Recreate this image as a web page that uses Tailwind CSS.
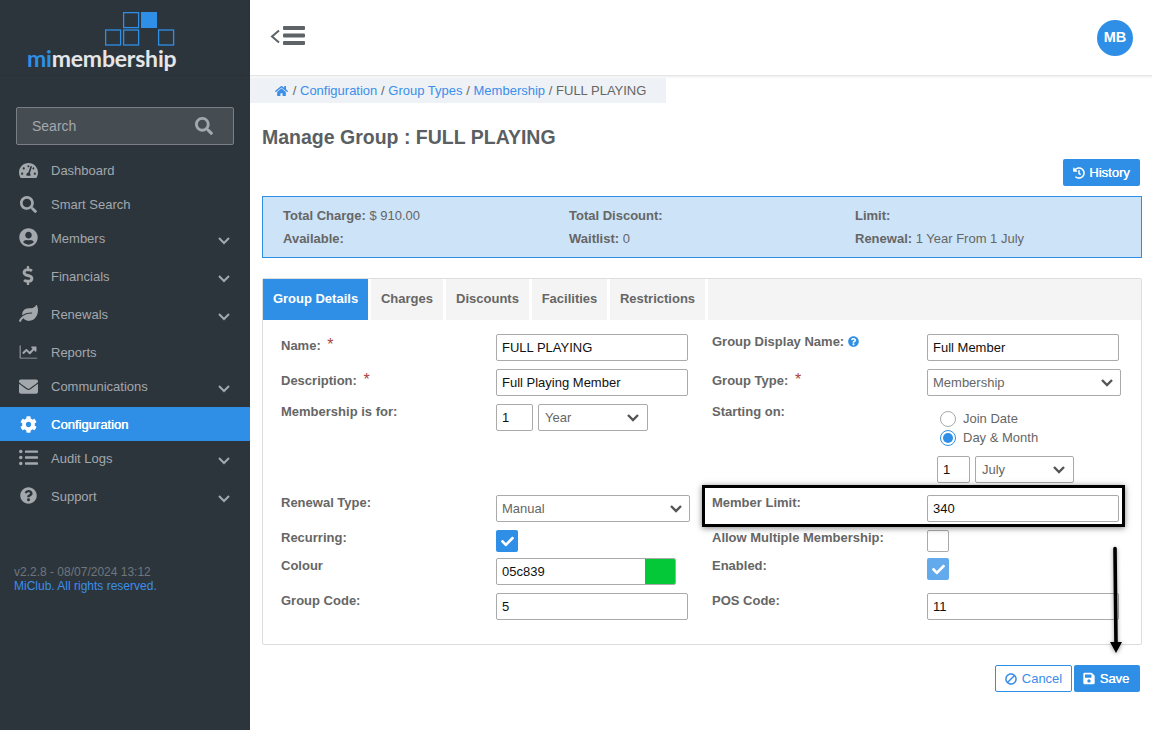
<!DOCTYPE html>
<html lang="en">
<head>
    <meta charset="UTF-8">
    <title>Manage Group</title>
    <script src="https://cdn.jsdelivr.net/npm/@tailwindcss/browser@4"></script>
</head>
<body class="font-['Liberation_Sans',Arial,sans-serif] text-[13px] text-[#666] bg-white">
<div class="relative flex w-[1152px] h-[730px] overflow-hidden">

    <!-- Sidebar -->
    <aside class="w-[250px] shrink-0 bg-[#2d353c] text-[#a3a8ad]">
        <div class="relative h-[76px] border-b border-[#2a3138]">
            <svg class="absolute left-[105px] top-[12px]" width="70" height="34" viewBox="0 0 70 34" fill="none" stroke="#2f8fe6" stroke-width="1.3">
                <rect x="18.6" y="0.6" width="15" height="15"/>
                <rect x="36" y="0" width="16" height="16" fill="#2f8fe6" stroke="none"/>
                <rect x="0.6" y="18" width="15" height="15"/>
                <rect x="18.6" y="18" width="15" height="15"/>
                <rect x="53.6" y="18" width="15" height="15"/>
            </svg>
            <div class="absolute left-[27px] top-[44px] font-['Lato',sans-serif] font-bold text-[23px] leading-[28px] tracking-[-0.2px] text-[#e4e6e8]"><span class="text-[#2f8fe6]">mi</span>membership</div>
        </div>

        <div class="mx-4 mt-[31px] h-[38px] flex items-center justify-between pl-[15px] pr-[20px] bg-[#454c52] border border-[#7b7f83] rounded-[2px] text-[14px] text-[#a3a8ad]">
            <span>Search</span>
            <svg class="w-[18px] h-[18px] fill-[#a3a8ad]" viewBox="0 0 512 512"><path d="M505 442.7L405.3 343c-4.5-4.5-10.6-7-17-7H372c27.6-35.3 44-79.7 44-128C416 93.1 322.9 0 208 0S0 93.1 0 208s93.1 208 208 208c48.3 0 92.7-16.4 128-44v16.3c0 6.4 2.5 12.5 7 17l99.7 99.7c9.4 9.4 24.6 9.4 33.9 0l28.3-28.3c9.4-9.4 9.4-24.6.1-34zM208 336c-70.7 0-128-57.2-128-128 0-70.7 57.2-128 128-128 70.7 0 128 57.2 128 128 0 70.7-57.2 128-128 128z"/></svg>
        </div>

        <nav class="mt-2">
            <a class="flex items-center h-[34px]">
                <span class="w-[51px] flex justify-center pl-[5px]"><svg class="w-[19px] h-[17px] fill-[#a3a8ad]" viewBox="0 0 576 512"><path d="M288 32C128.94 32 0 160.94 0 320c0 52.8 14.25 102.26 39.06 144.8 5.61 9.62 16.3 15.2 27.44 15.2h443c11.14 0 21.83-5.58 27.44-15.2C561.75 422.26 576 372.8 576 320c0-159.06-128.94-288-288-288zm0 64c14.71 0 26.58 10.13 30.32 23.65-1.11 2.26-2.64 4.23-3.45 6.67l-9.22 27.67c-5.13 3.49-10.97 6.01-17.64 6.01-17.67 0-32-14.33-32-32S270.33 96 288 96zM96 384c-17.67 0-32-14.33-32-32s14.33-32 32-32 32 14.33 32 32-14.33 32-32 32zm48-160c-17.67 0-32-14.33-32-32s14.33-32 32-32 32 14.33 32 32-14.33 32-32 32zm246.77-72.41l-61.33 184C343.13 347.33 352 364.54 352 384c0 11.72-3.38 22.55-8.88 32H232.88c-5.5-9.45-8.88-20.28-8.88-32 0-33.94 26.5-61.43 59.9-63.59l61.34-184.01c4.17-12.56 17.73-19.45 30.36-15.17 12.57 4.19 19.35 17.79 15.17 30.36zm14.66 57.2l15.52-46.55c3.47-1.29 7.13-2.23 11.05-2.23 17.67 0 32 14.33 32 32s-14.33 32-32 32c-11.38-.01-20.89-6.28-26.57-15.22zM480 384c-17.67 0-32-14.33-32-32s14.33-32 32-32 32 14.33 32 32-14.33 32-32 32z"/></svg></span>
                <span class="pt-[2px]">Dashboard</span>
            </a>
            <a class="flex items-center h-[34px]">
                <span class="w-[51px] flex justify-center pl-[5px]"><svg class="w-[17px] h-[17px] fill-[#a3a8ad]" viewBox="0 0 512 512"><path d="M505 442.7L405.3 343c-4.5-4.5-10.6-7-17-7H372c27.6-35.3 44-79.7 44-128C416 93.1 322.9 0 208 0S0 93.1 0 208s93.1 208 208 208c48.3 0 92.7-16.4 128-44v16.3c0 6.4 2.5 12.5 7 17l99.7 99.7c9.4 9.4 24.6 9.4 33.9 0l28.3-28.3c9.4-9.4 9.4-24.6.1-34zM208 336c-70.7 0-128-57.2-128-128 0-70.7 57.2-128 128-128 70.7 0 128 57.2 128 128 0 70.7-57.2 128-128 128z"/></svg></span>
                <span class="pt-[2px]">Smart Search</span>
            </a>
            <a class="flex items-start h-[38px] pt-[9px] leading-[16px]">
                <span class="w-[51px] flex justify-center pl-[5px] -mt-[2px]"><svg class="w-[19px] h-[19px] fill-[#a3a8ad]" viewBox="0 0 496 512"><path d="M248 8C111 8 0 119 0 256s111 248 248 248 248-111 248-248S385 8 248 8zm0 96c48.6 0 88 39.4 88 88s-39.4 88-88 88-88-39.4-88-88 39.4-88 88-88zm0 344c-58.7 0-111.3-26.6-146.5-68.2 18.8-35.4 55.6-59.8 98.5-59.8 2.4 0 4.8.4 7.1 1.1 13 4.2 26.6 6.9 40.9 6.9 14.3 0 28-2.7 40.9-6.9 2.3-.7 4.7-1.1 7.1-1.1 42.9 0 79.7 24.4 98.5 59.8C359.3 421.4 306.7 448 248 448z"/></svg></span>
                <span class="flex-1 mt-px">Members</span>
                <svg class="w-[12px] h-[8px] mr-[20px] mt-[7px] fill-none stroke-[#a3a8ad] stroke-2" viewBox="0 0 12 8"><path d="M1 1l5 5 5-5"/></svg>
            </a>
            <a class="flex items-start h-[38px] pt-[9px] leading-[16px]">
                <span class="w-[51px] flex justify-center pl-[5px] -mt-[2px]"><svg class="w-[12px] h-[19px] fill-[#a3a8ad]" viewBox="0 0 288 512"><path d="M209.2 233.4l-108-31.6C88.7 198.2 80 186.5 80 173.5c0-16.3 13.2-29.5 29.5-29.5h66.3c12.2 0 24.2 3.7 34.2 10.5 6.1 4.1 14.3 3.1 19.5-2l34.8-34c7.1-6.9 6.1-18.4-1.8-24.5C238 74.8 207.4 64.1 176 64V16c0-8.8-7.2-16-16-16h-32c-8.8 0-16 7.2-16 16v48h-2.5C45.8 64-5.4 118.7.5 183.6c4.2 46.1 39.4 83.6 83.8 96.6l102.5 30c12.5 3.7 21.2 15.3 21.2 28.3 0 16.3-13.2 29.5-29.5 29.5h-66.3C100 368 88 364.3 78 357.5c-6.1-4.1-14.3-3.1-19.5 2l-34.8 34c-7.1 6.9-6.1 18.4 1.8 24.5 24.5 19.2 55.1 29.9 86.5 30v48c0 8.8 7.2 16 16 16h32c8.8 0 16-7.2 16-16v-48.2c46.6-.9 90.3-28.6 105.7-72.7 21.5-61.6-14.6-124.8-72.5-141.7z"/></svg></span>
                <span class="flex-1 mt-px">Financials</span>
                <svg class="w-[12px] h-[8px] mr-[20px] mt-[7px] fill-none stroke-[#a3a8ad] stroke-2" viewBox="0 0 12 8"><path d="M1 1l5 5 5-5"/></svg>
            </a>
            <a class="flex items-start h-[38px] pt-[9px] leading-[16px]">
                <span class="w-[51px] flex justify-center pl-[5px] -mt-[1px]"><svg class="w-[19px] h-[17px] fill-[#a3a8ad]" viewBox="0 0 576 512"><path d="M546.2 9.7c-5.6-12.5-21.6-13-28.3-1.2C486.9 62.4 431.4 96 368 96h-80C182 96 96 182 96 288c0 7 .8 13.7 1.5 20.5C161.3 262.8 253.4 224 384 224c8.8 0 16 7.2 16 16s-7.2 16-16 16C132.6 256 26 410.1 2.4 468c-6.6 16.3 1.2 34.9 17.5 41.6 16.4 6.8 35-1.1 41.8-17.3 1.5-3.6 20.9-47.9 71.9-90.6 32.4 43.9 94 85.8 174.9 77.2C465.5 467.5 576 326.7 576 154.3c0-50.2-10.8-102.2-29.8-144.6z"/></svg></span>
                <span class="flex-1 mt-px">Renewals</span>
                <svg class="w-[12px] h-[8px] mr-[20px] mt-[7px] fill-none stroke-[#a3a8ad] stroke-2" viewBox="0 0 12 8"><path d="M1 1l5 5 5-5"/></svg>
            </a>
            <a class="flex items-center h-[34px]">
                <span class="w-[51px] flex justify-center pl-[5px]"><svg class="w-[21px] h-[18px] fill-[#a3a8ad]" viewBox="0 0 512 512"><path d="M496 416H32V80c0-8-6-14-14-14s-14 6-14 14v350c0 8 6 14 14 14h478c8 0 14-6 14-14s-6-14-14-14zM464 96H350c-18 0-27 22-14 35l35 35-83 83-74-74c-10-10-26-10-36 0l-90 90c-8 8-8 20 0 28l14 14c8 8 20 8 28 0l70-70 74 74c10 10 26 10 36 0l103-103 35 35c13 13 35 4 35-14V112c1-9-6-16-19-16z"/></svg></span>
                <span class="pt-[2px]">Reports</span>
            </a>
            <a class="flex items-start h-[38px] pt-[9px] leading-[16px]">
                <span class="w-[51px] flex justify-center pl-[5px] -mt-[1px]"><svg class="w-[19px] h-[19px] fill-[#a3a8ad]" viewBox="0 0 512 512"><path d="M502.3 190.8c3.9-3.1 9.7-.2 9.7 4.7V400c0 26.5-21.5 48-48 48H48c-26.5 0-48-21.5-48-48V195.6c0-5 5.7-7.8 9.7-4.7 22.4 17.4 52.1 39.5 154.1 113.6 21.1 15.4 56.7 47.8 92.2 47.6 35.7.3 72-32.8 92.3-47.6 102-74.1 131.6-96.3 154-113.7zM256 320c23.2.4 56.6-29.2 73.4-41.4 132.7-96.3 142.8-104.7 173.4-128.7 5.8-4.5 9.2-11.5 9.2-18.9v-19c0-26.5-21.5-48-48-48H48C21.5 64 0 85.5 0 112v19c0 7.4 3.4 14.3 9.2 18.9 30.6 23.9 40.7 32.4 173.4 128.7 16.8 12.2 50.2 41.8 73.4 41.4z"/></svg></span>
                <span class="flex-1 mt-px">Communications</span>
                <svg class="w-[12px] h-[8px] mr-[20px] mt-[7px] fill-none stroke-[#a3a8ad] stroke-2" viewBox="0 0 12 8"><path d="M1 1l5 5 5-5"/></svg>
            </a>
            <a class="flex items-center h-[34px] bg-[#2f8fe6] text-white">
                <span class="w-[51px] flex justify-center pl-[5px]"><svg class="w-[17px] h-[17px] fill-white" viewBox="0 0 512 512"><path d="M487.4 315.7l-42.6-24.6c4.3-23.2 4.3-47 0-70.2l42.6-24.6c4.9-2.8 7.1-8.6 5.5-14-11.1-35.6-30-67.8-54.7-94.6-3.8-4.1-10-5.1-14.8-2.3L380.8 110c-17.9-15.4-38.5-27.3-60.8-35.1V25.8c0-5.6-3.9-10.5-9.4-11.7-36.7-8.2-74.3-7.8-109.2 0-5.5 1.2-9.4 6.1-9.4 11.7V75c-22.2 7.9-42.8 19.8-60.8 35.1L88.7 85.5c-4.9-2.8-11-1.9-14.8 2.3-24.7 26.7-43.6 58.9-54.7 94.6-1.7 5.4.6 11.2 5.5 14L67.3 221c-4.3 23.2-4.3 47 0 70.2l-42.6 24.6c-4.9 2.8-7.1 8.6-5.5 14 11.1 35.6 30 67.8 54.7 94.6 3.8 4.1 10 5.1 14.8 2.3l42.6-24.6c17.9 15.4 38.5 27.3 60.8 35.1v49.2c0 5.6 3.9 10.5 9.4 11.7 36.7 8.2 74.3 7.8 109.2 0 5.5-1.2 9.4-6.1 9.4-11.7v-49.2c22.2-7.9 42.8-19.8 60.8-35.1l42.6 24.6c4.9 2.8 11 1.9 14.8-2.3 24.7-26.7 43.6-58.9 54.7-94.6 1.5-5.5-.7-11.3-5.6-14.1zM256 336c-44.1 0-80-35.9-80-80s35.9-80 80-80 80 35.9 80 80-35.9 80-80 80z"/></svg></span>
                <span class="pt-[2px] [text-shadow:0.3px_0_0_#fff]">Configuration</span>
            </a>
            <a class="flex items-start h-[38px] pt-[9px] leading-[16px]">
                <span class="w-[51px] flex justify-center pl-[5px] -mt-[2px]"><svg class="w-[19px] h-[19px] fill-[#a3a8ad]" viewBox="0 0 512 512"><path d="M48 48a48 48 0 1 0 48 48 48 48 0 0 0-48-48zm0 160a48 48 0 1 0 48 48 48 48 0 0 0-48-48zm0 160a48 48 0 1 0 48 48 48 48 0 0 0-48-48zm448 16H176a16 16 0 0 0-16 16v32a16 16 0 0 0 16 16h320a16 16 0 0 0 16-16v-32a16 16 0 0 0-16-16zm0-320H176a16 16 0 0 0-16 16v32a16 16 0 0 0 16 16h320a16 16 0 0 0 16-16V80a16 16 0 0 0-16-16zm0 160H176a16 16 0 0 0-16 16v32a16 16 0 0 0 16 16h320a16 16 0 0 0 16-16v-32a16 16 0 0 0-16-16z"/></svg></span>
                <span class="flex-1 mt-px">Audit Logs</span>
                <svg class="w-[12px] h-[8px] mr-[20px] mt-[7px] fill-none stroke-[#a3a8ad] stroke-2" viewBox="0 0 12 8"><path d="M1 1l5 5 5-5"/></svg>
            </a>
            <a class="flex items-start h-[38px] pt-[9px] leading-[16px]">
                <span class="w-[51px] flex justify-center pl-[5px] -mt-[1px]"><svg class="w-[17px] h-[17px] fill-[#a3a8ad]" viewBox="0 0 512 512"><path d="M504 256c0 136.997-111.043 248-248 248S8 392.997 8 256C8 119.083 119.043 8 256 8s248 111.083 248 248zM262.655 90c-54.497 0-89.255 22.957-116.549 63.758-3.536 5.286-2.353 12.415 2.715 16.258l34.699 26.31c5.205 3.947 12.621 3.008 16.665-2.122 17.864-22.658 30.113-35.797 57.303-35.797 20.429 0 45.698 13.148 45.698 32.958 0 14.976-12.363 22.667-32.534 33.976C247.128 238.528 216 254.941 216 296v4c0 6.627 5.373 12 12 12h56c6.627 0 12-5.373 12-12v-1.333c0-28.462 83.186-29.647 83.186-106.667 0-58.002-60.165-102-116.531-102zM256 338c-25.365 0-46 20.635-46 46 0 25.364 20.635 46 46 46s46-20.636 46-46c0-25.365-20.635-46-46-46z"/></svg></span>
                <span class="flex-1 mt-px">Support</span>
                <svg class="w-[12px] h-[8px] mr-[20px] mt-[7px] fill-none stroke-[#a3a8ad] stroke-2" viewBox="0 0 12 8"><path d="M1 1l5 5 5-5"/></svg>
            </a>
        </nav>

        <div class="mt-[48px] pl-[14px] text-[12px] leading-[14px] text-[#6f767c]">
            <div>v2.2.8 - 08/07/2024 13:12</div>
            <div class="text-[#3b8eea]">MiClub. All rights reserved.</div>
        </div>
    </aside>

    <!-- Main -->
    <main class="flex-1 min-w-0">
        <header class="h-[76px] flex items-center justify-between pl-[20px] pr-[19px] border-b border-[#e6e6e6] shadow-[0_1px_2px_rgba(0,0,0,0.08)]">
            <svg class="w-[36px] h-[20px] mb-[3px]" viewBox="0 0 36 20"><path d="M9 4.5L2 10.5l7 6" fill="none" stroke="#5e6367" stroke-width="2"/><rect x="13" y="0" width="22" height="4" rx="1" fill="#5e6367"/><rect x="13" y="7.5" width="22" height="4" rx="1" fill="#5e6367"/><rect x="13" y="15" width="22" height="4" rx="1" fill="#5e6367"/></svg>
            <div class="w-[36px] h-[36px] rounded-full bg-[#2f8fe6] text-white font-bold text-[14.5px] pt-px flex items-center justify-center">MB</div>
        </header>

        <div class="mt-[2px] w-[416px] h-[25px] bg-[#eef1f5] pl-[25px] flex items-center gap-[3.7px] text-[#3b8eea]">
            <svg class="w-[13px] h-[12px] fill-[#3b8eea]" viewBox="0 0 576 512"><path d="M280.37 148.26L96 300.11V464a16 16 0 0 0 16 16l112.06-.29a16 16 0 0 0 15.92-16V368a16 16 0 0 1 16-16h64a16 16 0 0 1 16 16v95.64a16 16 0 0 0 16 16.05L464 480a16 16 0 0 0 16-16V300L295.67 148.26a12.19 12.19 0 0 0-15.3 0zM571.6 251.47L488 182.56V44.05a12 12 0 0 0-12-12h-56a12 12 0 0 0-12 12v72.61L318.47 43a48 48 0 0 0-61 0L4.34 251.47a12 12 0 0 0-1.6 16.9l25.5 31A12 12 0 0 0 45.15 301l235.22-193.74a12.19 12.19 0 0 1 15.3 0L530.9 301a12 12 0 0 0 16.9-1.6l25.5-31a12 12 0 0 0-1.7-16.93z"/></svg>
            <span class="ml-px text-[#666]">/</span><a>Configuration</a>
            <span class="text-[#666]">/</span><a>Group Types</a>
            <span class="text-[#666]">/</span><a>Membership</a>
            <span class="text-[#666]">/</span><span class="text-[#666]">FULL PLAYING</span>
        </div>

        <div class="pl-[12px] pr-[10px]">
            <h1 class="mt-[22px] h-[24px] text-[19.5px] leading-[24px] font-bold text-[#5a5f63]">Manage Group : FULL PLAYING</h1>

            <div class="mt-[10px] flex justify-end pr-[2px]">
                <button class="h-[27px] w-[77px] bg-[#2f8fe6] text-white rounded-[2px] flex items-center justify-center gap-[4px] [text-shadow:0.3px_0_0_#fff]">
                    <svg class="w-[12px] h-[12px] fill-white" viewBox="0 0 512 512"><path d="M504 255.531c.253 136.64-111.18 248.372-247.82 248.468-59.015.042-113.223-20.53-155.822-54.911-11.077-8.94-11.905-25.541-1.839-35.607l11.267-11.267c8.609-8.609 22.353-9.551 31.891-1.984C173.062 425.135 212.781 440 256 440c101.705 0 184-82.311 184-184 0-101.705-82.311-184-184-184-48.814 0-93.149 18.969-126.068 49.932l50.754 50.754c10.08 10.08 2.941 27.314-11.313 27.314H24c-8.837 0-16-7.163-16-16V38.627c0-14.254 17.234-21.393 27.314-11.314l49.372 49.372C129.209 34.136 189.552 8 256 8c136.81 0 247.747 110.78 248 247.531zm-180.912 78.784l9.823-12.63c8.138-10.463 6.253-25.542-4.21-33.679L288 256.349V152c0-13.255-10.745-24-24-24h-16c-13.255 0-24 10.745-24 24v135.651l65.409 50.874c10.463 8.137 25.541 6.253 33.679-4.21z"/></svg>
                    History
                </button>
            </div>

            <!-- Summary -->
            <div class="mt-[10px] h-[62px] bg-[#cce3f8] border border-[#2f8fe6] pl-[20px] pt-[11px] grid grid-cols-[286px_286px_1fr] auto-rows-[23px] leading-[15px]">
                <div><b>Total Charge:</b> $ 910.00</div>
                <div><b>Total Discount:</b></div>
                <div><b>Limit:</b></div>
                <div><b>Available:</b></div>
                <div><b>Waitlist:</b> 0</div>
                <div><b>Renewal:</b> 1 Year From 1 July</div>
            </div>

            <!-- Tabs panel -->
            <div class="mt-[20px] h-[367px] border border-[#ddd] rounded-[2px]">
                <div class="h-[41px] flex bg-white gap-[3px] font-bold">
                    <div class="w-[105px] pb-[2px] bg-[#2f8fe6] text-white flex items-center justify-center">Group Details</div>
                    <div class="w-[72px] pb-[2px] bg-[#f4f4f4] flex items-center justify-center">Charges</div>
                    <div class="w-[83px] pb-[2px] bg-[#f4f4f4] flex items-center justify-center">Discounts</div>
                    <div class="w-[75px] pb-[2px] bg-[#f4f4f4] flex items-center justify-center">Facilities</div>
                    <div class="w-[95px] pb-[2px] bg-[#f4f4f4] flex items-center justify-center">Restrictions</div>
                    <div class="flex-1 bg-[#f4f4f4]"></div>
                </div>

                <div class="pl-[18px] pt-[14px] grid grid-cols-[215px_216px_215px_1fr] grid-rows-[35px_35px_91px_35px_28px_35px_35px] font-bold leading-[15px]">
                    <!-- Row 1 -->
                    <label class="pt-[3px]">Name: <span class="ml-[3px] text-[#a94442] text-[16px] font-normal">*</span></label>
                    <div><input class="w-[192px] h-[27px] border border-[#aaa] rounded-[2px] px-[5px] font-normal text-[#111]" value="FULL PLAYING"></div>
                    <label class="flex items-start gap-[4px]">Group Display Name:
                        <svg class="w-[11px] h-[11px] mt-[2px] fill-[#2f8fe6]" viewBox="0 0 512 512"><path d="M504 256c0 136.997-111.043 248-248 248S8 392.997 8 256C8 119.083 119.043 8 256 8s248 111.083 248 248zM262.655 90c-54.497 0-89.255 22.957-116.549 63.758-3.536 5.286-2.353 12.415 2.715 16.258l34.699 26.31c5.205 3.947 12.621 3.008 16.665-2.122 17.864-22.658 30.113-35.797 57.303-35.797 20.429 0 45.698 13.148 45.698 32.958 0 14.976-12.363 22.667-32.534 33.976C247.128 238.528 216 254.941 216 296v4c0 6.627 5.373 12 12 12h56c6.627 0 12-5.373 12-12v-1.333c0-28.462 83.186-29.647 83.186-106.667 0-58.002-60.165-102-116.531-102zM256 338c-25.365 0-46 20.635-46 46 0 25.364 20.635 46 46 46s46-20.636 46-46c0-25.365-20.635-46-46-46z"/></svg>
                    </label>
                    <div><input class="w-[192px] h-[27px] border border-[#aaa] rounded-[2px] px-[5px] font-normal text-[#111]" value="Full Member"></div>

                    <!-- Row 2 -->
                    <label class="pt-[3px]">Description: <span class="ml-[3px] text-[#a94442] text-[16px] font-normal">*</span></label>
                    <div><input class="w-[192px] h-[27px] border border-[#aaa] rounded-[2px] px-[5px] font-normal text-[#111]" value="Full Playing Member"></div>
                    <label class="pt-[3px]">Group Type: <span class="ml-[3px] text-[#a94442] text-[16px] font-normal">*</span></label>
                    <div class="w-[194px] h-[27px] border border-[#aaa] rounded-[2px] px-[5px] flex items-center justify-between font-normal">
                        <span>Membership</span>
                        <svg class="w-[12px] h-[8px] mr-[2px] fill-none stroke-[#555] stroke-[2.4]" viewBox="0 0 12 8"><path d="M1 1l5 5 5-5"/></svg>
                    </div>

                    <!-- Row 3 -->
                    <label>Membership is for:</label>
                    <div class="flex gap-[5px] items-start font-normal">
                        <input class="w-[37px] h-[27px] border border-[#aaa] rounded-[2px] px-[5px] text-[#111]" value="1">
                        <div class="w-[110px] h-[27px] border border-[#aaa] rounded-[2px] px-[6px] flex items-center justify-between">
                            <span>Year</span>
                            <svg class="w-[12px] h-[8px] mr-[2px] fill-none stroke-[#555] stroke-[2.4]" viewBox="0 0 12 8"><path d="M1 1l5 5 5-5"/></svg>
                        </div>
                    </div>
                    <label>Starting on:</label>
                    <div class="font-normal pl-[13px] pt-[5px]">
                        <div class="flex items-center h-[19px] gap-[7px]"><span class="w-[16px] h-[16px] rounded-full border border-[#aaa] bg-white"></span>Join Date</div>
                        <div class="flex items-center h-[19px] gap-[7px]"><span class="w-[16px] h-[16px] rounded-full border border-[#2f8fe6] bg-white flex items-center justify-center"><span class="w-[10px] h-[10px] rounded-full bg-[#2f8fe6]"></span></span>Day &amp; Month</div>
                        <div class="flex gap-[5px] mt-[9px] -ml-[3px]">
                            <input class="w-[33px] h-[27px] border border-[#aaa] rounded-[2px] px-[5px] text-[#111]" value="1">
                            <div class="w-[99px] h-[27px] border border-[#aaa] rounded-[2px] px-[6px] flex items-center justify-between">
                                <span>July</span>
                                <svg class="w-[12px] h-[8px] mr-[2px] fill-none stroke-[#555] stroke-[2.4]" viewBox="0 0 12 8"><path d="M1 1l5 5 5-5"/></svg>
                            </div>
                        </div>
                    </div>

                    <!-- Row 4 -->
                    <label>Renewal Type:</label>
                    <div class="w-[194px] h-[27px] border border-[#aaa] rounded-[2px] px-[5px] flex items-center justify-between font-normal">
                        <span>Manual</span>
                        <svg class="w-[12px] h-[8px] mr-[2px] fill-none stroke-[#555] stroke-[2.4]" viewBox="0 0 12 8"><path d="M1 1l5 5 5-5"/></svg>
                    </div>
                    <label>Member Limit:</label>
                    <div><input class="w-[192px] h-[27px] border border-[#aaa] rounded-[2px] px-[5px] font-normal text-[#111]" value="340"></div>

                    <!-- Row 5 -->
                    <label>Recurring:</label>
                    <div class="w-[22px] h-[22px] bg-[#2f8fe6] rounded-[2px] flex items-center justify-center">
                        <svg class="w-[13px] h-[13px] fill-white" viewBox="0 0 512 512"><path d="M173.898 439.404l-166.4-166.4c-9.997-9.997-9.997-26.206 0-36.204l36.203-36.204c9.997-9.998 26.207-9.998 36.204 0L192 312.69 432.095 72.596c9.997-9.997 26.207-9.997 36.204 0l36.203 36.204c9.997 9.997 9.997 26.206 0 36.204l-294.4 294.401c-9.998 9.997-26.207 9.997-36.204-.001z"/></svg>
                    </div>
                    <label>Allow Multiple Membership:</label>
                    <div class="w-[22px] h-[22px] border border-[#aaa] rounded-[2px] bg-white"></div>

                    <!-- Row 6 -->
                    <label>Colour</label>
                    <div class="w-[180px] h-[27px] border border-[#aaa] rounded-[2px] flex font-normal text-[#111] overflow-hidden">
                        <input class="w-[148px] px-[5px]" value="05c839">
                        <div class="flex-1 bg-[#05c839]"></div>
                    </div>
                    <label>Enabled:</label>
                    <div class="w-[22px] h-[22px] bg-[#63aaec] rounded-[2px] flex items-center justify-center">
                        <svg class="w-[13px] h-[13px] fill-white" viewBox="0 0 512 512"><path d="M173.898 439.404l-166.4-166.4c-9.997-9.997-9.997-26.206 0-36.204l36.203-36.204c9.997-9.998 26.207-9.998 36.204 0L192 312.69 432.095 72.596c9.997-9.997 26.207-9.997 36.204 0l36.203 36.204c9.997 9.997 9.997 26.206 0 36.204l-294.4 294.401c-9.998 9.997-26.207 9.997-36.204-.001z"/></svg>
                    </div>

                    <!-- Row 7 -->
                    <label>Group Code:</label>
                    <div><input class="w-[192px] h-[27px] border border-[#aaa] rounded-[2px] px-[5px] font-normal text-[#111]" value="5"></div>
                    <label>POS Code:</label>
                    <div><input class="w-[192px] h-[27px] border border-[#aaa] rounded-[2px] px-[5px] font-normal text-[#111]" value="11"></div>
                </div>
            </div>

            <!-- Actions -->
            <div class="mt-[20px] flex justify-end gap-[2px] pr-[2px]">
                <button class="w-[77px] h-[27px] border border-[#2f8fe6] rounded-[2px] text-[#3b8eea] flex items-center justify-center gap-[5px]">
                    <svg class="w-[12px] h-[12px] fill-[#3b8eea] -scale-x-100" viewBox="0 0 512 512"><path d="M256 8C119.034 8 8 119.033 8 256s111.034 248 248 248 248-111.034 248-248S392.967 8 256 8zm130.108 117.892c65.448 65.448 70 165.481 20.677 235.637L150.47 105.216c70.204-49.356 170.226-44.735 235.638 20.676zM125.892 386.108c-65.448-65.448-70-165.481-20.677-235.637L361.53 406.784c-70.203 49.356-170.226 44.736-235.638-20.676z"/></svg>
                    Cancel
                </button>
                <button class="w-[66px] h-[27px] pr-[2px] bg-[#2f8fe6] rounded-[2px] text-white flex items-center justify-center gap-[5px] [text-shadow:0.3px_0_0_#fff]">
                    <svg class="w-[12px] h-[13px] fill-white" viewBox="0 0 448 512"><path d="M433.941 129.941l-83.882-83.882A48 48 0 0 0 316.118 32H48C21.49 32 0 53.49 0 80v352c0 26.51 21.49 48 48 48h352c26.51 0 48-21.49 48-48V163.882a48 48 0 0 0-14.059-33.941zM224 416c-35.346 0-64-28.654-64-64 0-35.346 28.654-64 64-64s64 28.654 64 64c0 35.346-28.654 64-64 64zm96-304.52V212c0 6.627-5.373 12-12 12H76c-6.627 0-12-5.373-12-12V108c0-6.627 5.373-12 12-12h228.52c3.183 0 6.235 1.264 8.485 3.515l3.48 3.48A11.996 11.996 0 0 1 320 111.48z"/></svg>
                    Save
                </button>
            </div>
        </div>
    </main>

    <!-- Annotations drawn over the page -->
    <div class="absolute left-[702px] top-[485px] w-[423px] h-[42px] border-[3px] border-black shadow-[0_1px_6px_rgba(0,0,0,0.5)]"></div>
    <svg class="absolute left-[1105px] top-[545px] drop-shadow-[0_1px_2px_rgba(0,0,0,0.4)]" width="22" height="114" viewBox="0 0 22 114" fill="none">
        <path d="M10 3.5L11 100" stroke="#000" stroke-width="3.6" stroke-linecap="round"/>
        <path d="M5 97h12l-6 11z" fill="#000"/>
    </svg>
</div>
</body>
</html>
